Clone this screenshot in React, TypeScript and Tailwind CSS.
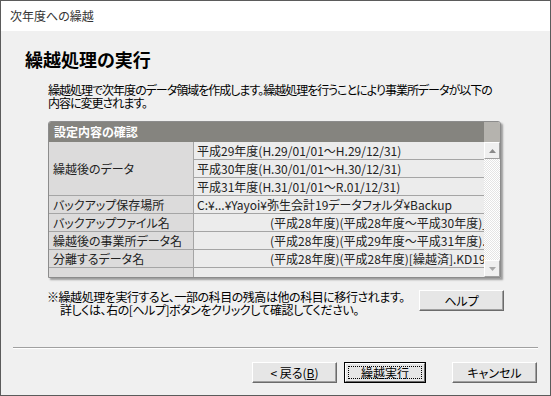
import React from 'react';

const rows1 = [
  '平成29年度(H.29/01/01～H.29/12/31)',
  '平成30年度(H.30/01/01～H.30/12/31)',
  '平成31年度(H.31/01/01～R.01/12/31)',
];

const rows2 = [
  { label: 'バックアップ保存場所', value: 'C:¥...¥Yayoi¥弥生会計19データフォルダ¥Backup', indent: false },
  { label: 'バックアップファイル名', value: '(平成28年度)(平成28年度～平成30年度)_', indent: true },
  { label: '繰越後の事業所データ名', value: '(平成28年度)(平成29年度～平成31年度).', indent: true },
  { label: '分離するデータ名', value: '(平成28年度)(平成28年度)[繰越済].KD19', indent: true },
];

const WinButton: React.FC<{ width: string; children: React.ReactNode }> = ({ width, children }) => (
  <button
    className={`${width} h-[21px] bg-[#e6e6e6] border border-t-white border-l-white border-r-[#6b6b6b] border-b-[#6b6b6b] shadow-[inset_-1px_-1px_0_#a0a0a0] text-[12px] leading-none text-black flex items-center justify-center`}
  >
    {children}
  </button>
);

const App: React.FC = () => {
  return (
    <div className="w-[551px] h-[396px] border border-[#5b5b5b] bg-[#f0f0f0] flex flex-col overflow-hidden text-black font-['Noto_Sans_CJK_JP',sans-serif] [font-feature-settings:'palt']">
      {/* title bar */}
      <div className="h-[30px] shrink-0 bg-white flex items-center pl-[9px] text-[12px] text-[#333]">次年度への繰越</div>

      <h1 className="mt-[18px] ml-[24px] text-[18px] leading-[20px] font-bold">繰越処理の実行</h1>

      <div className="mt-[14px] ml-[47px] text-[12px] leading-[13px] tracking-[-1px] whitespace-nowrap">
        <div>繰越処理で次年度のデータ領域を作成します。繰越処理を行うことにより事業所データが以下の</div>
        <div>内容に変更されます。</div>
      </div>

      {/* confirmation panel */}
      <div className="mt-[12px] ml-[47px] w-[453px] shrink-0 flex rounded-t-[3px] overflow-hidden border border-[#8c8c8c] shadow-[2px_2px_2px_rgba(0,0,0,0.35)]">
        <div className="flex-1 flex flex-col min-w-0">
          <div className="h-[20px] bg-[#85847f] text-white font-bold text-[12px] pl-[5px] flex items-center">設定内容の確認</div>
          <div className="grid grid-cols-[145px_1fr] auto-rows-[18px] text-[12px] text-[#222]">
            <div className="row-span-3 bg-[#dcdbdb] border-r border-b border-[#a5a5a5] pl-[4px] flex items-center">繰越後のデータ</div>
            {rows1.map((v) => (
              <div key={v} className="bg-[#ececec] border-b border-[#a5a5a5] pl-[3px] flex items-center whitespace-nowrap overflow-hidden">
                {v}
              </div>
            ))}
            {rows2.map((r) => (
              <React.Fragment key={r.label}>
                <div className="bg-[#dcdbdb] border-r border-b border-[#a5a5a5] pl-[4px] flex items-center whitespace-nowrap">{r.label}</div>
                <div className={`bg-[#ececec] border-b border-[#a5a5a5] flex items-center whitespace-nowrap overflow-hidden ${r.indent ? 'pl-[76px]' : 'pl-[3px]'}`}>
                  {r.value}
                </div>
              </React.Fragment>
            ))}
          </div>
          <div className="h-[9px] flex">
            <div className="w-[145px] bg-[#dcdbdb] border-r border-[#a5a5a5]" />
            <div className="flex-1 bg-[#ececec]" />
          </div>
        </div>

        {/* scrollbar */}
        <div className="w-[16px] shrink-0 flex flex-col">
          <div className="h-[20px] bg-[#b5b3ae]" />
          <div className="h-[17px] bg-[#f0f0f0] border border-t-white border-l-white border-r-[#a0a0a0] border-b-[#a0a0a0] flex items-center justify-center">
            <svg width="7" height="4" viewBox="0 0 7 4">
              <path d="M3.5 0 L7 4 L0 4 Z" fill="#8a8a8a" />
            </svg>
          </div>
          <div className="flex-1 bg-[repeating-conic-gradient(#e4e4e4_0%_25%,#ffffff_0%_50%)] bg-[length:2px_2px]" />
          <div className="h-[17px] bg-[#f0f0f0] border border-t-white border-l-white border-r-[#a0a0a0] border-b-[#a0a0a0] flex items-center justify-center">
            <svg width="7" height="4" viewBox="0 0 7 4">
              <path d="M0 0 L7 0 L3.5 4 Z" fill="#a8a8a8" />
            </svg>
          </div>
        </div>
      </div>

      {/* note + help */}
      <div className="mt-[12px] ml-[46px] w-[457px] flex justify-between items-start">
        <div className="text-[12px] leading-[13px] tracking-[-0.45px] whitespace-nowrap">
          <div>※繰越処理を実行すると、一部の科目の残高は他の科目に移行されます。</div>
          <div className="pl-[13px]">詳しくは、右の[ヘルプ]ボタンをクリックして確認してください。</div>
        </div>
        <WinButton width="w-[85px]">ヘルプ</WinButton>
      </div>

      {/* separator */}
      <div className="mt-[31px] ml-[12px] w-[525px] h-0 border-t border-b border-t-[#a0a0a0] border-b-white" />

      {/* bottom buttons */}
      <div className="mt-[13px] flex justify-end pr-[13px]">
        <WinButton width="w-[85px]">
          {'< 戻る('}
          <u>B</u>
          {')'}
        </WinButton>
        <button className="ml-[7px] w-[82px] h-[21px] border border-black flex">
          <div className="flex-1 flex bg-[#e6e6e6] border border-t-white border-l-white border-r-[#6b6b6b] border-b-[#6b6b6b]">
            <div className="flex-1 m-[2px] border border-dotted border-black flex items-center justify-center text-[12px] leading-none">
              繰越実行
            </div>
          </div>
        </button>
        <div className="ml-[26px]">
          <WinButton width="w-[85px]">キャンセル</WinButton>
        </div>
      </div>
    </div>
  );
};

export default App;
